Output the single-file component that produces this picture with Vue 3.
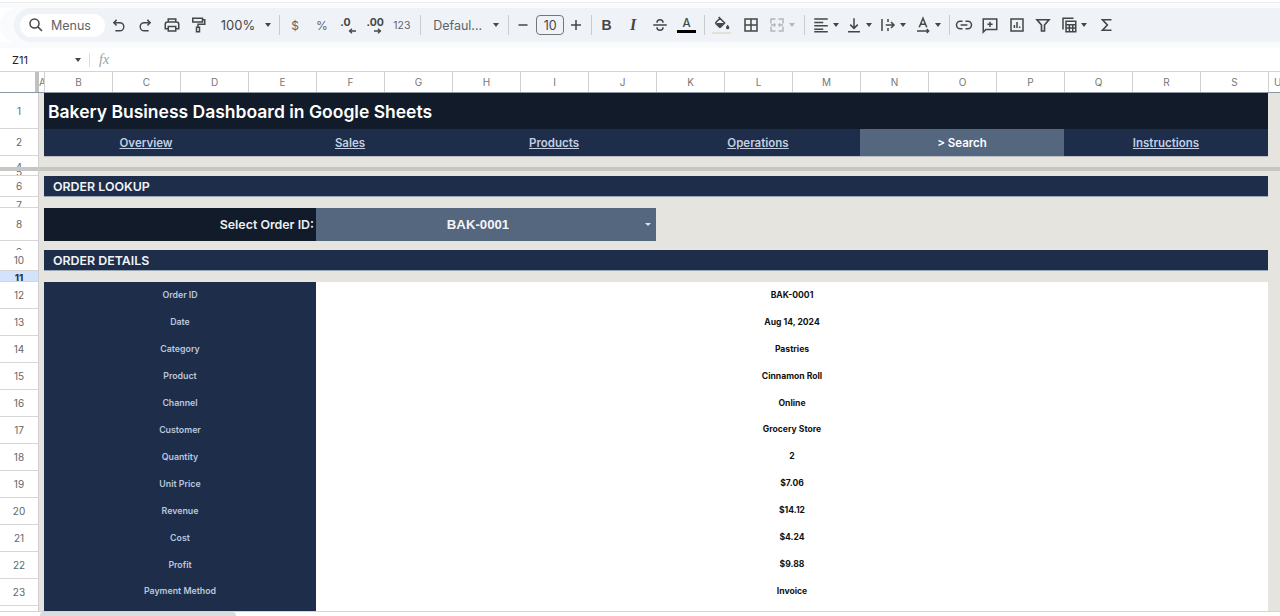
<script setup>
const columns = 'BCDEFGHIJKLMNOPQRS'.split('')
const navItems = ['Overview', 'Sales', 'Products', 'Operations', '> Search', 'Instructions']
const details = [
    ['Order ID', 'BAK-0001'],
    ['Date', 'Aug 14, 2024'],
    ['Category', 'Pastries'],
    ['Product', 'Cinnamon Roll'],
    ['Channel', 'Online'],
    ['Customer', 'Grocery Store'],
    ['Quantity', '2'],
    ['Unit Price', '$7.06'],
    ['Revenue', '$14.12'],
    ['Cost', '$4.24'],
    ['Profit', '$9.88'],
    ['Payment Method', 'Invoice']
]
const tableRows = [12, 13, 14, 15, 16, 17, 18, 19, 20, 21, 22, 23]
</script>

<template>
    <div class="app">
        <div class="top-strip"></div>
        <div class="toolbar">
            <div class="search">
                <svg width="18" height="18" viewBox="0 0 24 24" fill="none" stroke="#444746" stroke-width="2"><circle cx="10" cy="10" r="6"/><path d="M14.500 14.500 20 20"/></svg>
                <span>Menus</span>
            </div>
            <button class="tb"><svg width="15" height="15" viewBox="0 0 24 24" fill="none" stroke="#444746" stroke-width="2.300"><path d="M9 3 4.500 7.500 9 12M4.500 7.500H14a6 6 0 0 1 0 13H7"/></svg></button>
            <button class="tb"><svg width="15" height="15" viewBox="0 0 24 24" fill="none" stroke="#444746" stroke-width="2.300"><path d="m15 3 4.500 4.500L15 12M19.500 7.500H10a6 6 0 0 0 0 13h7"/></svg></button>
            <button class="tb"><svg width="18" height="18" viewBox="0 0 24 24" fill="none" stroke="#444746" stroke-width="2"><path d="M7 8V4h10v4M7 17H3v-6a3 3 0 0 1 3-3h12a3 3 0 0 1 3 3v6h-4"/><path d="M7 14h10v6H7z"/></svg></button>
            <button class="tb"><svg width="18" height="18" viewBox="0 0 24 24" fill="none" stroke="#444746" stroke-width="2"><path d="M5 3h13v5H5zM18 5h3v6h-9v4"/><path d="M10 15h4v6h-4z"/></svg></button>
            <div class="zoom-select"><span>100%</span><i class="caret"></i></div>
            <i class="sep sep-a"></i>
            <button class="tb txt">$</button>
            <button class="tb txt">%</button>
            <button class="tb dec dec-one">
                <b>.0</b>
                <svg width="8" height="6" viewBox="0 0 8 6" fill="none" stroke="#444746" stroke-width="1.300"><path d="M8 3H1.500M4 .8 1.500 3 4 5.200"/></svg>
            </button>
            <button class="tb dec dec-two">
                <b>.00</b>
                <svg width="8" height="6" viewBox="0 0 8 6" fill="none" stroke="#444746" stroke-width="1.300"><path d="M0 3h6.500M4 .8 6.500 3 4 5.200"/></svg>
            </button>
            <button class="tb txt small">123</button>
            <i class="sep sep-b"></i>
            <div class="font-select"><span>Defaul...</span><i class="caret"></i></div>
            <i class="sep sep-c"></i>
            <button class="tb size-btn"><svg width="14" height="14" viewBox="0 0 14 14" stroke="#444746" stroke-width="1.500"><path d="M2.500 7h9"/></svg></button>
            <div class="size-input">10</div>
            <button class="tb plus-btn"><svg width="14" height="14" viewBox="0 0 14 14" stroke="#444746" stroke-width="1.500"><path d="M2 7h10M7 2v10"/></svg></button>
            <i class="sep sep-d"></i>
            <button class="tb fmt bold">B</button>
            <button class="tb fmt ital">I</button>
            <button class="tb"><svg width="18" height="18" viewBox="0 0 24 24" fill="none" stroke="#444746" stroke-width="2"><path d="M3 12h18M16 9c0-2.500-2-4-4-4S8 6.500 8 9M8 15c0 2.500 2 4 4 4s4-1.500 4-4"/></svg></button>
            <button class="tb text-color"><span>A</span><i></i></button>
            <i class="sep sep-g"></i>
            <button class="tb fill-btn">
                <svg width="16" height="14" viewBox="0 0 24 21"><path fill="none" stroke="#444746" stroke-width="2.200" d="M7 1.500 16 10.500 10 16.500a1.500 1.500 0 0 1-2 0L3 11.500a1.500 1.500 0 0 1 0-2L9.500 3"/><path fill="#444746" d="M3.500 10.500h11.500L10 16.500a1.500 1.500 0 0 1-2 0zM20.500 13s-2.500 2.800-2.500 4.500a2.500 2.500 0 0 0 5 0c0-1.700-2.500-4.500-2.500-4.500z"/></svg>
                <i></i>
            </button>
            <button class="tb border-btn"><svg width="18" height="18" viewBox="0 0 24 24" fill="none" stroke="#444746" stroke-width="2"><path d="M4 4h16v16H4zM12 4v16M4 12h16"/></svg></button>
            <button class="tb split split-merge">
                <svg width="18" height="18" viewBox="0 0 24 24" fill="none" stroke="#b4b8bd" stroke-width="2"><path d="M4 10V4h6M14 4h6v6M4 14v6h6M14 20h6v-6M9 12H4m6 0-2-2m2 2-2 2M15 12h5m-6 0 2-2m-2 2 2 2"/></svg>
                <i class="caret muted"></i>
            </button>
            <i class="sep sep-e"></i>
            <button class="tb split">
                <svg width="18" height="18" viewBox="0 0 24 24" stroke="#444746" stroke-width="2"><path d="M3 4h18M3 8.500h12M3 13h18M3 17.500h12M3 21h18"/></svg>
                <i class="caret"></i>
            </button>
            <button class="tb split">
                <svg width="18" height="18" viewBox="0 0 24 24" fill="none" stroke="#444746" stroke-width="2"><path d="M12 3v13M7 11.500l5 5 5-5M4 21h16"/></svg>
                <i class="caret"></i>
            </button>
            <button class="tb split wide">
                <svg width="18" height="18" viewBox="0 0 24 24" fill="none" stroke="#444746" stroke-width="2"><path d="M4 4v16M9 12h11M16 8l4 4-4 4M12 4v4M12 16v4"/></svg>
                <i class="caret"></i>
            </button>
            <button class="tb split">
                <svg width="18" height="18" viewBox="0 0 24 24" fill="none" stroke="#444746" stroke-width="2"><path d="m7 15 5-12 5 12M8.500 11h7M4 20h15M17 17.500l2.500 2.500-2.500 2.500"/></svg>
                <i class="caret"></i>
            </button>
            <i class="sep sep-f"></i>
            <button class="tb link-btn"><svg width="18" height="18" viewBox="0 0 24 24" fill="none" stroke="#444746" stroke-width="2"><path d="M10 7H7a5 5 0 0 0 0 10h3M14 7h3a5 5 0 0 1 0 10h-3M7.500 12h9"/></svg></button>
            <button class="tb"><svg width="18" height="18" viewBox="0 0 24 24" fill="none" stroke="#444746" stroke-width="2"><path d="M3 4h18v14H6.500L3 21.500zM12 7.500v7M8.500 11h7"/></svg></button>
            <button class="tb"><svg width="18" height="18" viewBox="0 0 24 24" fill="none" stroke="#444746" stroke-width="2"><path d="M4 4h16v16H4zM8.500 16v-4M12 16V8M15.500 16v-2"/></svg></button>
            <button class="tb"><svg width="18" height="18" viewBox="0 0 24 24" fill="none" stroke="#444746" stroke-width="2.200"><path d="M4 5h16l-6 7v8h-4v-8z"/></svg></button>
            <button class="tb split split-calc">
                <svg width="18" height="18" viewBox="0 0 24 24" fill="none" stroke="#444746" stroke-width="2"><path d="M4 18V3h14M8 7h13v14H8zM8 11.500h13M8 16h13M12.500 11.500V21M17 11.500V21"/></svg>
                <i class="caret"></i>
            </button>
            <button class="tb"><svg width="18" height="18" viewBox="0 0 24 24" fill="none" stroke="#444746" stroke-width="2.200"><path d="M18 5H6l6.500 7L6 19h12"/></svg></button>
        </div>
        <div class="toolbar-gap"></div>

        <div class="formula-bar">
            <div class="name-box"><span>Z11</span><i class="caret"></i></div>
            <i class="formula-sep"></i>
            <span class="fx">fx</span>
        </div>

        <div class="col-heads">
            <div class="corner"></div>
            <div class="col-a">A</div>
            <div v-for="col in columns" :key="col" class="col-head">{{ col }}</div>
            <div class="col-rest">U</div>
        </div>

        <div class="sheet">
            <div class="row-heads">
                <div class="rh h36">1</div>
                <div class="rh h27">2</div>
                <div class="rh h11 cut low">4</div>
                <div class="freeze"></div>
                <div class="rh h5 stub">5</div>
                <div class="rh h21">6</div>
                <div class="rh h11 cut">7</div>
                <div class="rh h33">8</div>
                <div class="rh h9 cut low">9</div>
                <div class="rh h21">10</div>
                <div class="rh h11 cut current">11</div>
                <div v-for="n in tableRows" :key="n" class="rh h27">{{ n }}</div>
            </div>

            <div class="cells">
                <div class="title-row">
                    <h1>Bakery Business Dashboard in Google Sheets</h1>
                </div>
                <nav class="nav-row">
                    <a v-for="item in navItems" :key="item" :class="{ active: item === '> Search' }">{{ item }}</a>
                </nav>
                <div class="spacer h11"></div>
                <div class="freeze"></div>
                <div class="spacer h5"></div>
                <div class="section-bar">ORDER LOOKUP</div>
                <div class="spacer h11"></div>
                <div class="lookup">
                    <label>Select Order ID:</label>
                    <div class="dropdown">
                        <span>BAK-0001</span>
                        <i class="mini-caret"></i>
                    </div>
                </div>
                <div class="spacer h9"></div>
                <div class="section-bar">ORDER DETAILS</div>
                <div class="spacer h11"></div>
                <div class="details">
                    <div v-for="row in details" :key="row[0]" class="detail-row">
                        <div class="detail-label">{{ row[0] }}</div>
                        <div class="detail-value">{{ row[1] }}</div>
                    </div>
                    <div class="detail-row tail">
                        <div class="detail-label"></div>
                        <div class="detail-value"></div>
                    </div>
                </div>
            </div>
        </div>

        <div class="scrollbar"><div class="thumb"></div></div>
    </div>
</template>

<style>
html, body { margin: 0; background: #fff; overflow: hidden; }
</style>

<style scoped>
.app { width: 1280px; height: 616px; overflow: hidden; display: flex; flex-direction: column; background: #fff; font-family: Inter, "Liberation Sans", sans-serif; color: #444746; }
button { border: 0; padding: 0; background: transparent; font-family: inherit; color: inherit; }
i { display: block; font-style: normal; }

.top-strip { height: 8px; flex: none; background: linear-gradient(#fff 2px, #ececec 2px, #ececec 3px, #f9fbfd 3px); }
.toolbar { height: 34px; flex: none; margin-left: 14px; padding-left: 6px; display: flex; align-items: center; background: #eff3f8; border-radius: 17px 0 0 17px; box-shadow: -14px 0 0 #f9fbfd; }
.toolbar-gap { height: 6px; flex: none; background: #f9fbfd; }
.search { width: 85px; height: 23px; display: flex; align-items: center; gap: 6px; padding-left: 7px; box-sizing: border-box; background: #fff; border-radius: 12px; font-size: 12.500px; color: #5f6368; flex: none; }
.tb { width: 26.700px; height: 26px; flex: none; display: flex; align-items: center; justify-content: center; }
.zoom-select { width: 62px; flex: none; padding-left: 9px; box-sizing: border-box; display: flex; align-items: center; gap: 10px; font-size: 13px; }
.caret { width: 0; height: 0; border-left: 3.500px solid transparent; border-right: 3.500px solid transparent; border-top: 4px solid #444746; flex: none; }
.caret.muted { border-top-color: #b4b8bd; }
.sep { width: 1px; height: 20px; background: #c9ccd0; flex: none; }
.sep-a { margin: 0 2px 0 5px; }
.sep-b { margin: 0 6px 0 5px; }
.sep-c { margin: 0 0 0 6px; }
.sep-d { margin: 0 1px 0 3px; }
.sep-e { margin: 0 4px 0 4px; }
.sep-f { margin: 0 1px 0 4px; }
.sep-g { margin: 0 2px 0 4px; }
.txt { font-size: 12px; color: #5f6368; }
.txt.small { font-size: 10.500px; }
.dec { flex-direction: column; font-size: 10.500px; line-height: 10px; padding-top: 1px; box-sizing: border-box; color: #444746; }
.dec b { font-weight: 700; }
.dec-one b { margin-right: 6px; }
.dec-one svg { margin-left: 8px; }
.dec-two svg { margin-left: 5px; }
.font-select { width: 75px; flex: none; padding-left: 6px; box-sizing: border-box; display: flex; align-items: center; gap: 11px; font-size: 12.500px; color: #5f6368; }
.size-btn { width: 27px; }
.plus-btn { width: 24px; }
.size-input { width: 28px; height: 20px; flex: none; box-sizing: border-box; border: 1px solid #747775; border-radius: 4px; display: flex; align-items: center; justify-content: center; font-size: 12.500px; }
.fmt { font-family: "Liberation Sans", sans-serif; font-size: 14px; }
.fmt.bold { font-weight: 700; }
.fmt.ital { font-style: italic; font-weight: 700; font-family: "Liberation Serif", serif; font-size: 16px; }
.text-color { flex-direction: column; gap: 1px; font-size: 11.500px; font-weight: 500; }
.text-color i { width: 19px; height: 3px; background: #000; }
.text-color span { line-height: 12px; }
.fill-btn { flex-direction: column; width: 30px; }
.fill-btn i { width: 19px; height: 2px; background: #e3e0d6; margin-top: 2px; }
.border-btn { width: 27.700px; }
.link-btn { width: 25.700px; }
.split { width: 33.800px; justify-content: flex-start; padding-left: 3px; box-sizing: border-box; gap: 3px; }
.split.wide { width: 34.800px; }
.split-merge { width: 35px; }
.split-calc { width: 37px; }

.formula-bar { height: 24px; flex: none; display: flex; align-items: center; box-sizing: border-box; border-bottom: 1px solid #d4d4d4; }
.name-box { width: 81px; padding-left: 12px; box-sizing: border-box; display: flex; align-items: center; justify-content: space-between; font-size: 11px; color: #222; }
.formula-sep { width: 1px; height: 14px; background: #dcdcdc; margin-left: 8px; }
.fx { margin-left: 9px; font-family: "Liberation Serif", serif; font-style: italic; font-size: 14px; color: #9aa0a6; }

.col-heads { height: 21px; flex: none; display: flex; box-sizing: border-box; border-bottom: 1px solid #8d98a3; font-size: 10px; color: #777; }
.corner { width: 39px; flex: none; box-sizing: border-box; border-right: 4px solid #c0c0c0; }
.col-a { width: 5px; flex: none; overflow: hidden; text-align: center; line-height: 20px; }
.col-head { width: 68px; flex: none; box-sizing: border-box; border-left: 1px solid #d0d0d0; text-align: center; line-height: 20px; }
.col-rest { flex: 1; border-left: 1px solid #d0d0d0; padding-left: 5px; line-height: 20px; }

.sheet { flex: none; height: 518px; display: flex; overflow: hidden; }
.row-heads { width: 39px; flex: none; box-sizing: border-box; border-right: 1px solid #cfcfcf; }
.rh { box-sizing: border-box; border-bottom: 1px solid #d6d6d6; display: flex; align-items: center; justify-content: center; overflow: hidden; font-size: 10px; color: #666; }
.rh.cut { align-items: flex-start; padding-top: 2px; }
.rh.low { padding-top: 5px; border-bottom: 0; }
.rh.stub { align-items: flex-end; line-height: 5px; }
.rh.current { background: #d3e3fd; font-weight: 700; color: #1f2d44; padding-top: 1px; }
.h36 { height: 36px; }
.h33 { height: 33px; }
.h27 { height: 27px; }
.h21 { height: 21px; }
.h11 { height: 11px; }
.h9 { height: 9px; }
.h5 { height: 5px; }
.freeze { height: 4px; background: #c6c6c2; }

.cells { flex: 1; min-width: 0; padding-left: 5px; background: #e6e4df; }
.cells > * { width: 1224px; }
.cells > .freeze { width: calc(100% + 5px); margin-left: -5px; }
.title-row { height: 36px; padding-top: 1px; box-sizing: border-box; background: #111b2a; display: flex; align-items: center; }
.title-row h1 { margin: 0 0 0 4px; font-size: 17.500px; font-weight: 600; color: #fff; white-space: nowrap; }
.nav-row { height: 27px; display: grid; grid-template-columns: repeat(6, 1fr); background: #1d2d4a; box-shadow: 0 1px 0 #b8bdc4; }
.nav-row a { display: flex; align-items: center; justify-content: center; font-size: 11.500px; font-weight: 600; color: #c2cfe2; text-decoration: underline; }
.nav-row a.active { background: #55667f; color: #fff; text-decoration: none; }
.section-bar { height: 21px; box-sizing: border-box; padding-left: 9px; background: #1d2d4a; border-bottom: 1px solid #9aa6b4; font-size: 12.400px; font-weight: 600; line-height: 21px; color: #f1f3f6; }
.lookup { height: 33px; display: flex; }
.lookup label { width: 272px; box-sizing: border-box; padding-right: 2px; background: #111b2a; color: #eceff3; font-size: 12.400px; font-weight: 600; line-height: 33px; text-align: right; }
.dropdown { width: 340px; position: relative; box-sizing: border-box; padding-right: 16px; background: #55667f; color: #f4f5f7; display: flex; align-items: center; justify-content: center; font-family: "Liberation Sans", sans-serif; font-weight: 700; font-size: 13.200px; }
.mini-caret { position: absolute; right: 5px; top: 15px; width: 0; height: 0; border-left: 3px solid transparent; border-right: 3px solid transparent; border-top: 3px solid #dfe4ea; }
.details { background: #fff; }
.detail-row { height: 26.920px; display: flex; font-weight: 700; }
.detail-row.tail { height: 6px; }
.detail-label { width: 272px; flex: none; box-sizing: border-box; padding-bottom: 1px; background: #1d2d4a; color: #b9c8de; font-size: 8.800px; font-weight: 600; display: flex; align-items: center; justify-content: center; }
.detail-value { flex: 1; box-sizing: border-box; padding-bottom: 1px; color: #111; font-size: 8.600px; display: flex; align-items: center; justify-content: center; }

.scrollbar { flex: 1; border-top: 1px solid #d4d4d4; padding-left: 40px; }
.thumb { width: 196px; height: 5px; background: #dadce0; border-radius: 3px 3px 0 0; }
</style>
